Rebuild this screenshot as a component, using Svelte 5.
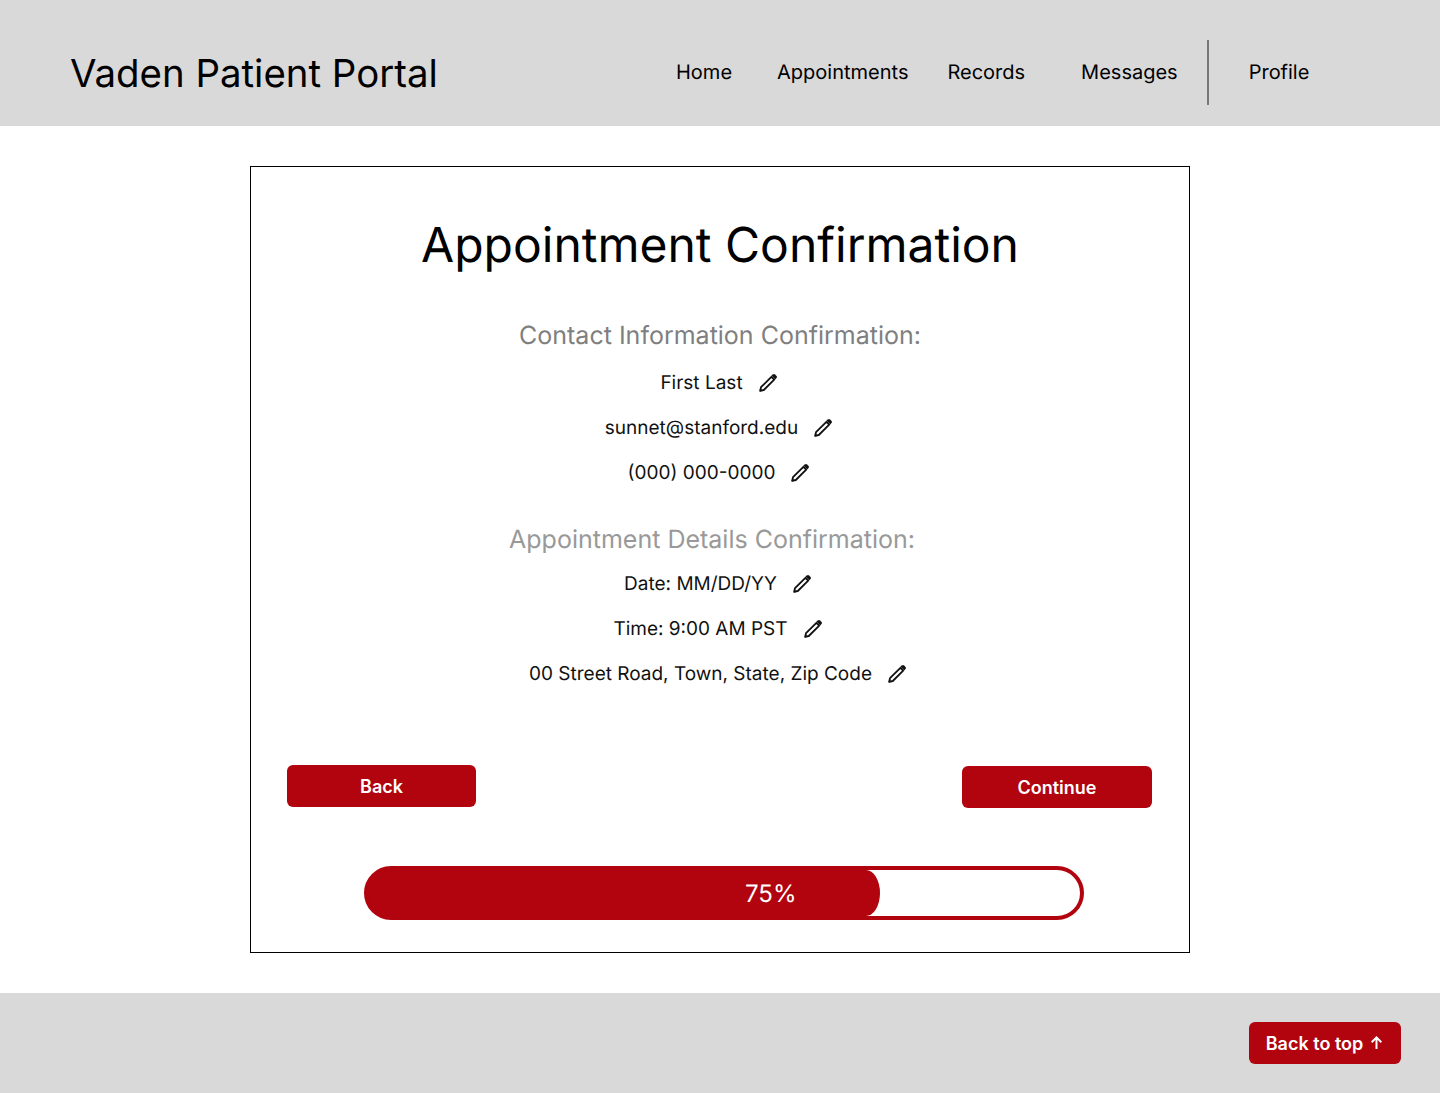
<script>
  const contact = ['First Last', 'sunnet@stanford.edu', '(000) 000-0000'];
  const details = ['Date: MM/DD/YY', 'Time: 9:00 AM PST', '00 Street Road, Town, State, Zip Code'];
  const progress = 75;
</script>

{#snippet pencil()}
  <svg class="pencil" width="20" height="20" viewBox="0 0 20 20" aria-hidden="true">
    <path d="M2.2 17.8 L3 14.2 L13.4 3.8 L16.2 6.6 L5.8 17 Z" fill="none" stroke="#111" stroke-width="1.8" stroke-linejoin="round" />
    <path d="M13.4 2.6 L15.4 1.2 Q16.2 .8 17 1.4 L18.6 3 Q19.2 3.8 18.8 4.6 L17.4 6.6 Z" fill="#111" />
    <path d="M1.6 18.4 L2.2 15.4 L4.6 17.8 Z" fill="#111" />
  </svg>
{/snippet}

<div class="page">
  <header class="header">
    <div class="brand">Vaden Patient Portal</div>
    <nav class="nav">
      <span class="link">Home</span>
      <span class="link appointments">Appointments</span>
      <span class="link records">Records</span>
      <span class="link messages">Messages</span>
      <span class="divider"></span>
      <span class="link">Profile</span>
    </nav>
  </header>

  <main class="main">
    <section class="card">
      <h1>Appointment Confirmation</h1>

      <h2 class="contact-title">Contact Information Confirmation:</h2>
      <ul class="rows">
        {#each contact as row}
          <li>{row}{@render pencil()}</li>
        {/each}
      </ul>

      <h2 class="details-title">Appointment Details Confirmation:</h2>
      <ul class="rows shifted">
        {#each details as row}
          <li>{row}{@render pencil()}</li>
        {/each}
      </ul>

      <div class="actions">
        <button class="btn back">Back</button>
        <button class="btn continue">Continue</button>
      </div>

      <div class="progress">
        <div class="fill" style="width: {progress * 0.9606}%">
          <span>{progress}%</span>
        </div>
      </div>
    </section>
  </main>

  <footer class="footer">
    <button class="btn top">
      Back to top
      <svg width="15" height="16" viewBox="0 0 15 16" aria-hidden="true">
        <path d="M7.5 14 V2.6 M2.7 7.2 L7.5 2.4 L12.3 7.2" fill="none" stroke="#fff" stroke-width="2" />
      </svg>
    </button>
  </footer>
</div>

<style>
  :global(body) {
    margin: 0;
    background: #fff;
  }

  .page {
    font-family: Inter, 'Liberation Sans', sans-serif;
    text-rendering: geometricPrecision;
    color: #000;
    width: 1440px;
    height: 1093px;
    display: flex;
    flex-direction: column;
  }

  .header {
    height: 126px;
    box-sizing: border-box;
    background: #d9d9d9;
    display: flex;
    align-items: center;
    padding: 19px 0 0 70px;
  }

  .brand {
    font-size: 38.4px;
    line-height: 46px;
    width: 606px;
    flex: none;
    margin-top: 2px;
  }

  .nav {
    display: flex;
    align-items: center;
    font-size: 20px;
    line-height: 24px;
  }

  .link {
    flex: none;
    margin-bottom: 2px;
  }

  .appointments {
    margin-left: 45px;
  }

  .records {
    margin-left: 39px;
  }

  .messages {
    margin-left: 56px;
  }

  .divider {
    flex: none;
    width: 2px;
    height: 65px;
    background: #777;
    margin: 0 40px 0 29px;
  }

  .main {
    flex: 1;
    display: flex;
    justify-content: center;
    padding-top: 40px;
  }

  .card {
    width: 940px;
    height: 787px;
    box-sizing: border-box;
    border: 1px solid #000;
    padding-top: 49px;
    display: flex;
    flex-direction: column;
    align-items: center;
  }

  h1 {
    font-size: 48px;
    font-weight: 400;
    line-height: 58px;
    margin: 0 0 47px;
  }

  h2 {
    font-size: 25px;
    font-weight: 400;
    line-height: 30px;
    margin: 0;
  }

  .contact-title {
    color: #7f7f7f;
  }

  .details-title {
    color: #999;
    margin-top: 40px;
    padding-right: 16px;
  }

  .rows {
    list-style: none;
    margin: 20px 0 0;
    padding: 0;
    display: flex;
    flex-direction: column;
    align-items: center;
    gap: 21px;
    font-size: 19px;
    line-height: 24px;
    color: #111;
  }

  .rows.shifted {
    margin-top: 17px;
    padding-right: 2px;
  }

  .rows li {
    display: flex;
    align-items: center;
    padding-right: 2px;
  }

  .pencil {
    margin-left: 15px;
  }

  .actions {
    align-self: stretch;
    display: flex;
    justify-content: space-between;
    align-items: flex-start;
    padding: 0 37px 0 36px;
    margin-top: 79px;
  }

  .btn {
    font-family: inherit;
    border: none;
    background: #b1040e;
    color: #fff;
    font-weight: 600;
    font-size: 18px;
    border-radius: 6px;
    height: 42px;
    padding: 0;
  }

  .back {
    width: 189px;
  }

  .continue {
    width: 190px;
    margin-top: 1px;
  }

  .progress {
    width: 720px;
    height: 54px;
    box-sizing: border-box;
    border: 4px solid #b1040e;
    border-radius: 27px;
    margin: 58px 0 0 7px;
    flex: none;
    overflow: hidden;
    /* backs the rounded left end so no seam shows under the border */
    background: linear-gradient(#b1040e, #b1040e) left / 50% 100% no-repeat;
  }

  .fill {
    height: 100%;
    background: #b1040e;
    border-radius: 0 14px 14px 0 / 0 23px 23px 0;
    color: #fff;
    font-size: 24px;
    display: flex;
    align-items: center;
    justify-content: flex-end;
    padding-right: 84px;
    box-sizing: border-box;
  }

  .footer {
    height: 100px;
    background: #d9d9d9;
    display: flex;
    justify-content: flex-end;
    align-items: flex-start;
    padding: 29px 39px 0 0;
    box-sizing: border-box;
  }

  .top {
    width: 152px;
    display: flex;
    align-items: center;
    justify-content: center;
    gap: 6px;
  }
</style>
